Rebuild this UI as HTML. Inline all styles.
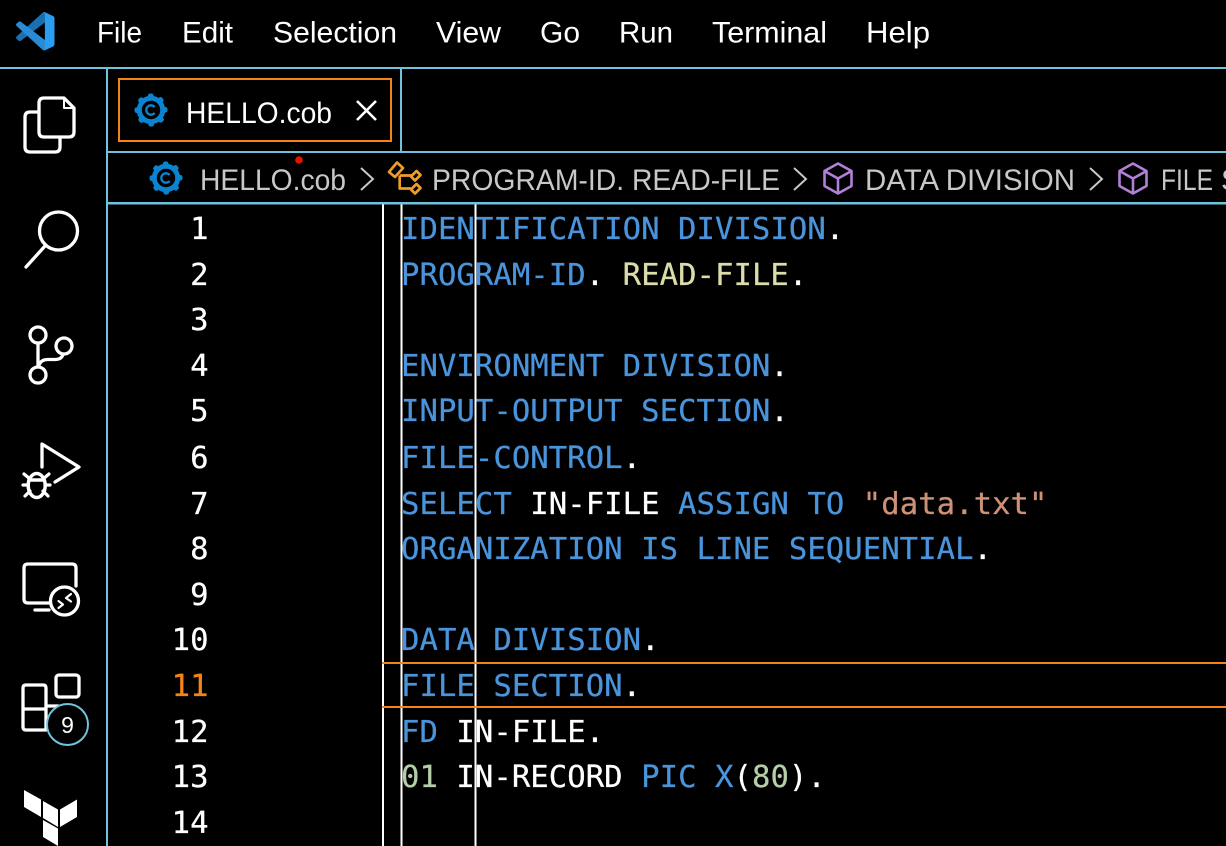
<!DOCTYPE html>
<html lang="en">
<head>
<meta charset="utf-8">
<title>HELLO.cob</title>
<style>
html,body{margin:0;padding:0;background:#000;width:1226px;height:846px;overflow:hidden}
svg{display:block}
.ui{font-family:"Liberation Sans",sans-serif;font-size:30px;fill:#fff}
.bc{font-family:"Liberation Sans",sans-serif;font-size:30px;fill:#c8c8c8}
.code{font-family:"DejaVu Sans Mono",monospace;font-size:30.6px;letter-spacing:.05px;white-space:pre;fill:#fff;stroke:#fff;stroke-width:.25}
.num{font-family:"DejaVu Sans Mono",monospace;font-size:30.6px;fill:#fff;stroke:#fff;stroke-width:.25;text-anchor:end}
.k{fill:#4a94dc;stroke:#4a94dc}.y{fill:#dcdcaa;stroke:#dcdcaa}.s{fill:#ce9178;stroke:#ce9178}.g{fill:#b5cea8;stroke:#b5cea8}
.ic{fill:none;stroke:#fff;stroke-width:3.3;stroke-linecap:round;stroke-linejoin:round}
</style>
</head>
<body>
<svg width="1226" height="846" viewBox="0 0 1226 846" xmlns="http://www.w3.org/2000/svg">
<defs>
<g id="gear">
<circle r="11.700" fill="none" stroke="#0a84d0" stroke-width="5"/>
<circle r="14.400" fill="none" stroke="#0a84d0" stroke-width="4.200" stroke-linecap="round" stroke-dasharray="1.500 9.810" transform="rotate(-94)"/>
<path d="M3.600 -3A4.700 4.700 0 1 0 3.600 3" fill="none" stroke="#0a84d0" stroke-width="2.300"/>
</g>
<g id="cube" fill="none" stroke="#b180d7" stroke-width="2.600" stroke-linejoin="round">
<path d="M15 1.500L28.500 9V24L15 31.500L1.500 24V9Z"/>
<path d="M1.500 9L15 16.500L28.500 9M15 16.500V31.500"/>
</g>
</defs>
<rect width="1226" height="846" fill="#000"/>

<!-- VS Code logo -->
<g transform="translate(16,12) scale(.385)">
<path d="M96.500 10.800 75.900.9c-2.400-1.200-5.200-.7-7.100 1.200L1.400 63.600c-1.800 1.600-1.800 4.500 0 6.100l5.500 5c1.500 1.300 3.700 1.400 5.300.2l81.200-61.600c2.700-2.100 6.600-.1 6.600 3.300v-.2c0-2.400-1.400-4.600-3.500-5.600z" fill="#1a6fb0"/>
<path d="M96.500 89.200 75.900 99.100c-2.400 1.200-5.200.7-7.100-1.200L1.400 36.400c-1.800-1.600-1.800-4.500 0-6.100l5.500-5c1.500-1.300 3.700-1.400 5.300-.2l81.200 61.600c2.700 2.100 6.600.1 6.600-3.300v.2c0 2.400-1.400 4.600-3.500 5.600z" fill="#2a8ad6"/>
<path d="M75.900 99.100c-2.400 1.200-5.200.7-7.100-1.200 2.300 2.300 6.200.7 6.200-2.600V4.700c0-3.300-3.900-4.900-6.200-2.600 1.900-1.900 4.700-2.400 7.100-1.200l20.600 9.900c2.200 1 3.500 3.200 3.500 5.600v67.200c0 2.400-1.400 4.600-3.500 5.600z" fill="#2a9df0"/>
</g>

<!-- Menu -->
<text class="ui" x="97" y="42.500" textLength="45" lengthAdjust="spacingAndGlyphs">File</text>
<text class="ui" x="182" y="42.500" textLength="51" lengthAdjust="spacingAndGlyphs">Edit</text>
<text class="ui" x="273" y="42.500" textLength="124" lengthAdjust="spacingAndGlyphs">Selection</text>
<text class="ui" x="436" y="42.500" textLength="65" lengthAdjust="spacingAndGlyphs">View</text>
<text class="ui" x="540" y="42.500" textLength="40" lengthAdjust="spacingAndGlyphs">Go</text>
<text class="ui" x="619" y="42.500" textLength="54" lengthAdjust="spacingAndGlyphs">Run</text>
<text class="ui" x="712" y="42.500" textLength="115" lengthAdjust="spacingAndGlyphs">Terminal</text>
<text class="ui" x="866" y="42.500" textLength="64" lengthAdjust="spacingAndGlyphs">Help</text>

<!-- Tab -->
<rect x="119" y="79" width="272" height="62" fill="none" stroke="#f38518" stroke-width="2"/>
<use href="#gear" x="151" y="110"/>
<text class="ui" x="186" y="123" textLength="146" lengthAdjust="spacingAndGlyphs">HELLO.cob</text>
<path d="M357 101L376 120M376 101L357 120" stroke="#fff" stroke-width="2.600" fill="none"/>

<!-- Breadcrumbs -->
<use href="#gear" x="166" y="178"/>
<text class="bc" x="200" y="190" textLength="146" lengthAdjust="spacingAndGlyphs">HELLO.cob</text>
<circle cx="299" cy="160" r="3.800" fill="#e51400"/>
<path d="M361 168L373 179L361 190" fill="none" stroke="#c8c8c8" stroke-width="2"/>
<g fill="none" stroke="#ee9d28" stroke-width="2.700" stroke-linejoin="round">
<path d="M389 172L397 162.500L403 168L395 177Z"/>
<path d="M411 176.500L416.500 171L420.500 175L415 180.500Z"/>
<path d="M411 189.500L416.500 184L420.500 188L415 193.500Z"/>
<path d="M399.700 175.500H411.500M399.700 175.500V188.500H411"/>
</g>
<text class="bc" x="432" y="190" textLength="348" lengthAdjust="spacingAndGlyphs">PROGRAM-ID. READ-FILE</text>
<path d="M794 168L806 179L794 190" fill="none" stroke="#c8c8c8" stroke-width="2"/>
<use href="#cube" x="823" y="162"/>
<text class="bc" x="865" y="190" textLength="210" lengthAdjust="spacingAndGlyphs">DATA DIVISION</text>
<path d="M1090 168L1102 179L1090 190" fill="none" stroke="#c8c8c8" stroke-width="2"/>
<use href="#cube" x="1118" y="162"/>
<text class="bc" x="1161" y="190" textLength="52" lengthAdjust="spacingAndGlyphs">FILE</text>
<text class="bc" x="1221" y="190">S</text>

<!-- Activity bar icons -->
<g class="ic">
<path d="M39 112H30Q25 112 25 117V147Q25 152 30 152H55Q60 152 60 147V138"/>
<path d="M44 98H64L74 108V132Q74 137 69 137H44Q39 137 39 132V103Q39 98 44 98Z"/>
<path d="M64 98V108H74" stroke-width="2"/>
<circle cx="58.500" cy="231" r="19"/>
<path d="M45 246L26 267"/>
<circle cx="38" cy="335" r="8"/>
<circle cx="64" cy="346" r="8"/>
<circle cx="38" cy="375" r="8"/>
<path d="M38 343V367M39 365Q41 359.500 48 359.500H55Q62 359.500 63 354"/>
<path d="M42 467V444L79 467L55 482"/>
<ellipse cx="36.700" cy="485.500" rx="8.500" ry="12" stroke-width="3.500"/>
<path d="M29 480H44" stroke-width="3.500"/>
<path d="M24 474L30 479M49 474L43 479M23 485H28M45 485H50M25 496L30 491M48 496L43 491" stroke-width="3.200"/>
<path d="M49 603H28Q24 603 24 599V568Q24 564 28 564H72Q76 564 76 568V586"/>
<path d="M35 610H49"/>
<circle cx="64.500" cy="601" r="14"/>
<path d="M58.500 601L63 604.500L58.500 608M71 594L66 598L71 601.500" stroke-width="2.200"/>
<rect x="56" y="675" width="23" height="22" rx="3"/>
<path d="M46 730H26Q23 730 23 727V688Q23 685 26 685H43Q46 685 46 688V730ZM23 709H46M46 706H58V720"/>
</g>
<circle cx="67.500" cy="724.500" r="20.500" fill="#000" stroke="#6fc3df" stroke-width="2"/>
<text x="67.500" y="733" text-anchor="middle" font-family="Liberation Sans,sans-serif" font-size="23" fill="#fff">9</text>
<g fill="#fff">
<path d="M24 790L41 799.500V817L24 807Z"/>
<path d="M43 801L58 809.500V827L43 818Z"/>
<path d="M60 809.500L77 799.500V817L60 827Z"/>
<path d="M43 820L58 828.500V846L43 837Z"/>
</g>

<!-- Line numbers -->
<g class="num">
<text x="208.500" y="239">1</text>
<text x="208.500" y="285">2</text>
<text x="208.500" y="330">3</text>
<text x="208.500" y="376">4</text>
<text x="208.500" y="421">5</text>
<text x="208.500" y="468">6</text>
<text x="208.500" y="514">7</text>
<text x="208.500" y="559">8</text>
<text x="208.500" y="605">9</text>
<text x="208.500" y="650">10</text>
<text x="208.500" y="696" style="fill:#f38518;stroke:#f38518">11</text>
<text x="208.500" y="742">12</text>
<text x="208.500" y="787">13</text>
<text x="208.500" y="833">14</text>
</g>

<!-- Code -->
<g class="code">
<text x="401" y="239"><tspan class="k">IDENTIFICATION DIVISION</tspan>.</text>
<text x="401" y="285"><tspan class="k">PROGRAM-ID</tspan>. <tspan class="y">READ-FILE</tspan>.</text>
<text x="401" y="376"><tspan class="k">ENVIRONMENT DIVISION</tspan>.</text>
<text x="401" y="421"><tspan class="k">INPUT-OUTPUT SECTION</tspan>.</text>
<text x="401" y="468"><tspan class="k">FILE-CONTROL</tspan>.</text>
<text x="401" y="514"><tspan class="k">SELECT</tspan> IN-FILE <tspan class="k">ASSIGN TO</tspan> <tspan class="s">"data.txt"</tspan></text>
<text x="401" y="559"><tspan class="k">ORGANIZATION IS LINE SEQUENTIAL</tspan>.</text>
<text x="401" y="650"><tspan class="k">DATA DIVISION</tspan>.</text>
<text x="401" y="696"><tspan class="k">FILE SECTION</tspan>.</text>
<text x="401" y="742"><tspan class="k">FD</tspan> IN-FILE.</text>
<text x="401" y="787"><tspan class="g">01</tspan> IN-RECORD <tspan class="k">PIC X</tspan>(<tspan class="g">80</tspan>).</text>
</g>

<!-- Guides -->
<rect x="382" y="204" width="2" height="642" fill="#fff"/>
<rect x="400.500" y="204" width="2" height="642" fill="#fff"/>
<rect x="474.500" y="204" width="2" height="642" fill="#fff"/>
<rect x="382" y="662" width="844" height="2" fill="#f38518"/>
<rect x="382" y="706" width="844" height="2" fill="#f38518"/>

<!-- Borders -->
<rect x="0" y="67" width="1226" height="2" fill="#6fc3df"/>
<rect x="106" y="68" width="2" height="778" fill="#6fc3df"/>
<rect x="400" y="68" width="2" height="83" fill="#6fc3df"/>
<rect x="107" y="151" width="1119" height="2" fill="#6fc3df"/>
<rect x="107" y="202" width="1119" height="2.500" fill="#6fc3df"/>
</svg>
</body>
</html>
